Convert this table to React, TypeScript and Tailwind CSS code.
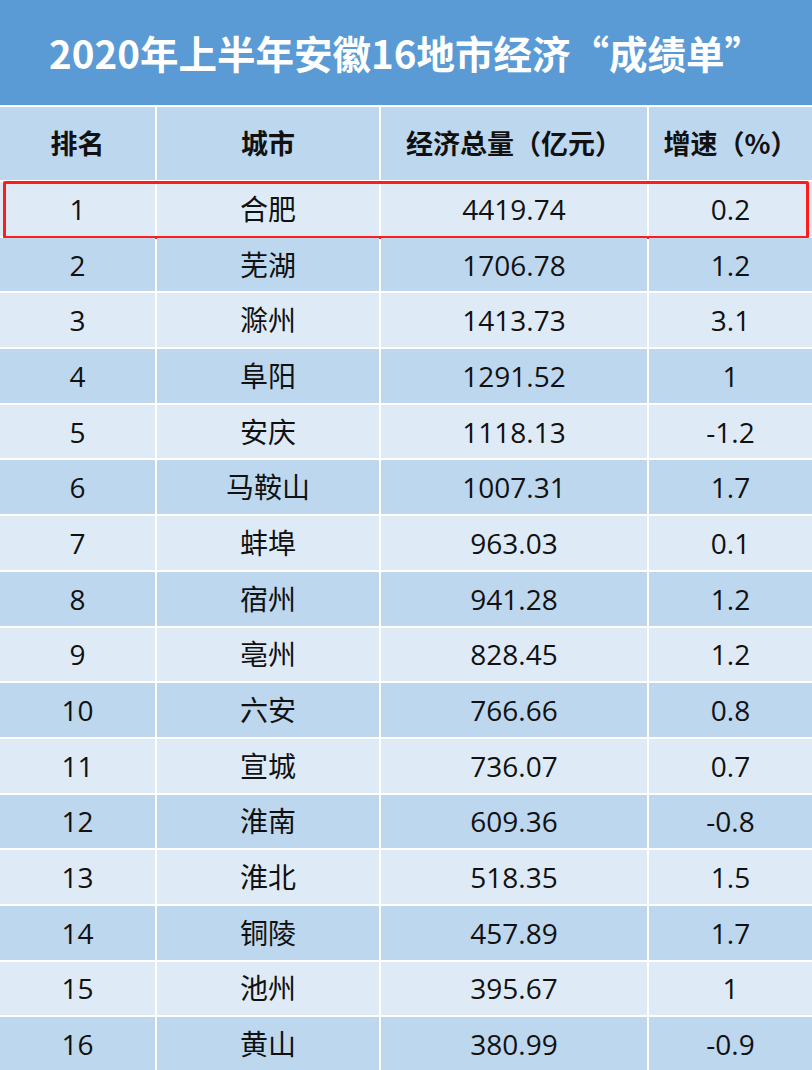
import React from "react";

const rows: [string, string, string, string][] = [
  ["1", "合肥", "4419.74", "0.2"],
  ["2", "芜湖", "1706.78", "1.2"],
  ["3", "滁州", "1413.73", "3.1"],
  ["4", "阜阳", "1291.52", "1"],
  ["5", "安庆", "1118.13", "-1.2"],
  ["6", "马鞍山", "1007.31", "1.7"],
  ["7", "蚌埠", "963.03", "0.1"],
  ["8", "宿州", "941.28", "1.2"],
  ["9", "亳州", "828.45", "1.2"],
  ["10", "六安", "766.66", "0.8"],
  ["11", "宣城", "736.07", "0.7"],
  ["12", "淮南", "609.36", "-0.8"],
  ["13", "淮北", "518.35", "1.5"],
  ["14", "铜陵", "457.89", "1.7"],
  ["15", "池州", "395.67", "1"],
  ["16", "黄山", "380.99", "-0.9"],
];

export default function App() {
  return (
    <div
      className="w-[812px] h-[1070px] overflow-hidden bg-white flex flex-col"
      style={{ fontFamily: '"Open Sans", "Noto Sans CJK SC", sans-serif' }}
    >
      <div className="h-[105px] shrink-0 bg-[#5b9bd5] flex items-center justify-center">
        <h1
          className="text-white font-bold text-[38.5px] leading-none"
          style={{ fontFamily: '"Noto Sans CJK SC", sans-serif' }}
        >
          2020年上半年安徽16地市经济“成绩单”
        </h1>
      </div>
      <div className="mt-[2px] flex flex-col gap-[2px]">
        <div className="grid grid-cols-[155px_222px_266px_163px] gap-x-[2px] h-[73px]">
          {["排名", "城市", "经济总量（亿元）", "增速（%）"].map((h) => (
            <div
              key={h}
              className="bg-[#bdd7ee] flex items-center justify-center font-bold text-[27px] text-[#111]"
              style={{ fontFamily: '"Noto Sans CJK SC", sans-serif' }}
            >
              {h}
            </div>
          ))}
        </div>
        {rows.map((r, i) => {
          const bg = i % 2 === 0 ? "bg-[#deebf7]" : "bg-[#bdd7ee]";
          return (
            <div
              key={r[0]}
              className="relative grid grid-cols-[155px_222px_266px_163px] gap-x-[2px] h-[53.7px]"
            >
              {r.map((c, j) => (
                <div
                  key={j}
                  className={`${bg} flex items-center justify-center text-[28px] text-[#111] leading-none`}
                >
                  {c}
                </div>
              ))}
              {i === 0 && (
                <div className="absolute left-[3px] right-[3px] top-[-1px] bottom-[-3px] border-[3px] border-[#ff1c1c] rounded-[2px] pointer-events-none" />
              )}
            </div>
          );
        })}
      </div>
    </div>
  );
}
